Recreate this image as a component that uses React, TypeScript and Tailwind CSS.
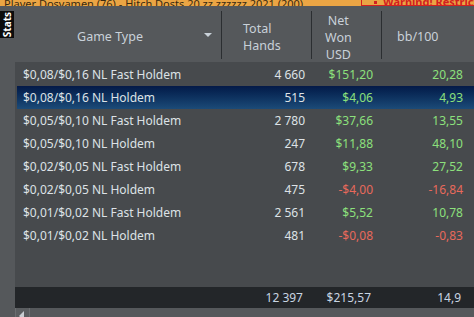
import React from 'react';

type Row = {
  game: string;
  hands: string;
  won: string;
  bb: string;
  neg?: boolean;
  selected?: boolean;
};

const ROWS: Row[] = [
  { game: '$0,08/$0,16 NL Fast Holdem', hands: '4 660', won: '$151,20', bb: '20,28' },
  { game: '$0,08/$0,16 NL Holdem', hands: '515', won: '$4,06', bb: '4,93', selected: true },
  { game: '$0,05/$0,10 NL Fast Holdem', hands: '2 780', won: '$37,66', bb: '13,55' },
  { game: '$0,05/$0,10 NL Holdem', hands: '247', won: '$11,88', bb: '48,10' },
  { game: '$0,02/$0,05 NL Fast Holdem', hands: '678', won: '$9,33', bb: '27,52' },
  { game: '$0,02/$0,05 NL Holdem', hands: '475', won: '-$4,00', bb: '-16,84', neg: true },
  { game: '$0,01/$0,02 NL Fast Holdem', hands: '2 561', won: '$5,52', bb: '10,78' },
  { game: '$0,01/$0,02 NL Holdem', hands: '481', won: '-$0,08', bb: '-0,83', neg: true },
];

const font = "font-['Noto_Sans','Segoe_UI','DejaVu_Sans',sans-serif]";

export default function App() {
  return (
    <div className={`w-[474px] h-[317px] overflow-hidden bg-[#55585b] flex flex-col ${font} text-[12px]`}>
      {/* window title strip */}
      <div className="h-[6px] bg-[#eba544] flex overflow-hidden">
        <div className="pl-[4px] text-[11px] leading-[6px] pt-[1px] text-[#3a2a10] whitespace-nowrap flex-1 overflow-hidden">
          Player Dosvamen (76) - Hitch Dosts 20 zz zzzzzz 2021 (200)
        </div>
        <div className="w-[113px] h-[6px] border-l border-b border-[#d42020] pl-[12px] flex items-end gap-[6px] text-[11px] leading-[6px] text-[#d42020] font-bold whitespace-nowrap overflow-hidden">
          <span className="w-[3px] h-[3px] bg-[#d42020] mb-px shrink-0" />
          <span>Warning! Restricted</span>
        </div>
      </div>

      <div className="flex flex-1 min-h-0">
        {/* side tab */}
        <div className="w-[15px] shrink-0 pt-[5px]">
          <div className="w-[14px] h-[27px] bg-[#0c0c0c] flex items-center justify-center">
            <span className="[writing-mode:vertical-rl] rotate-180 text-[10px] font-bold text-white leading-none">
              Stats
            </span>
          </div>
        </div>

        <div className="flex-1 flex flex-col min-w-0">
          {/* header */}
          <div className="h-[56px] flex text-[#c9d1d9] text-[12.5px] pt-[5px]">
            <div className="w-[206px] relative flex items-center justify-center pt-[1px]">
              <span className="-ml-[16px]">Game Type</span>
              <span className="absolute right-[9px] top-[22px] w-0 h-0 border-l-[4px] border-r-[4px] border-t-[4px] border-l-transparent border-r-transparent border-t-[#c9d1d9]" />
            </div>
            <div className="w-px h-[48px] bg-[#2b2e31]" />
            <div className="w-[89px] flex flex-col justify-center pl-[21px] leading-[17px] pt-[1px]">
              <span>Total</span>
              <span>Hands</span>
            </div>
            <div className="w-px h-[48px] bg-[#2b2e31]" />
            <div className="w-[69px] flex justify-start pl-[13px] pt-[2px]">
              <div className="flex flex-col items-center justify-center leading-[17px]">
                <span>Net</span>
                <span>Won</span>
                <span>USD</span>
              </div>
            </div>
            <div className="w-px h-[48px] bg-[#2b2e31]" />
            <div className="flex-1 flex items-center pl-[15px] pt-[1px]">bb/100</div>
          </div>

          {/* body */}
          <div className="flex-1 bg-[#474a4d] pt-px">
            {ROWS.map((r) => (
              <div
                key={r.game}
                className={`h-[23px] flex items-center ml-[2px] ${
                  r.selected ? 'bg-gradient-to-b from-[#041a48] to-[#1c4b78]' : ''
                }`}
              >
                <div className="w-[204px] pl-[6px] text-[#dde2e6] whitespace-nowrap">{r.game}</div>
                <div className="w-[90px] text-right pr-[6px] text-[#dde2e6]">{r.hands}</div>
                <div className={`w-[70px] text-right pr-[8px] ${r.neg ? 'text-[#e8695b]' : 'text-[#8ce07c]'}`}>
                  {r.won}
                </div>
                <div className={`flex-1 text-right pr-[11px] ${r.neg ? 'text-[#e8695b]' : 'text-[#8ce07c]'}`}>
                  {r.bb}
                </div>
              </div>
            ))}
          </div>

          {/* totals */}
          <div className="h-[21px] bg-[#232629] flex items-center text-[#c9d5e2]">
            <div className="w-[206px]" />
            <div className="w-[90px] text-right pr-[8px]">12 397</div>
            <div className="w-[70px] text-right pr-[10px]">$215,57</div>
            <div className="flex-1 text-right pr-[13px]">14,9</div>
          </div>
        </div>
      </div>

      {/* horizontal scrollbar */}
      <div className="h-[9px] flex">
        <div className="w-[15px]" />
        <div className="w-[15px] border-l border-r border-[#6a6d70] bg-[#5a5d60] relative overflow-hidden">
          <span className="absolute left-[3px] top-[3px] w-0 h-0 border-t-[5px] border-b-[5px] border-r-[5px] border-t-transparent border-b-transparent border-r-[#c8cdd2]" />
        </div>
        <div className="flex-1 bg-[#55585b]" />
      </div>
    </div>
  );
}
